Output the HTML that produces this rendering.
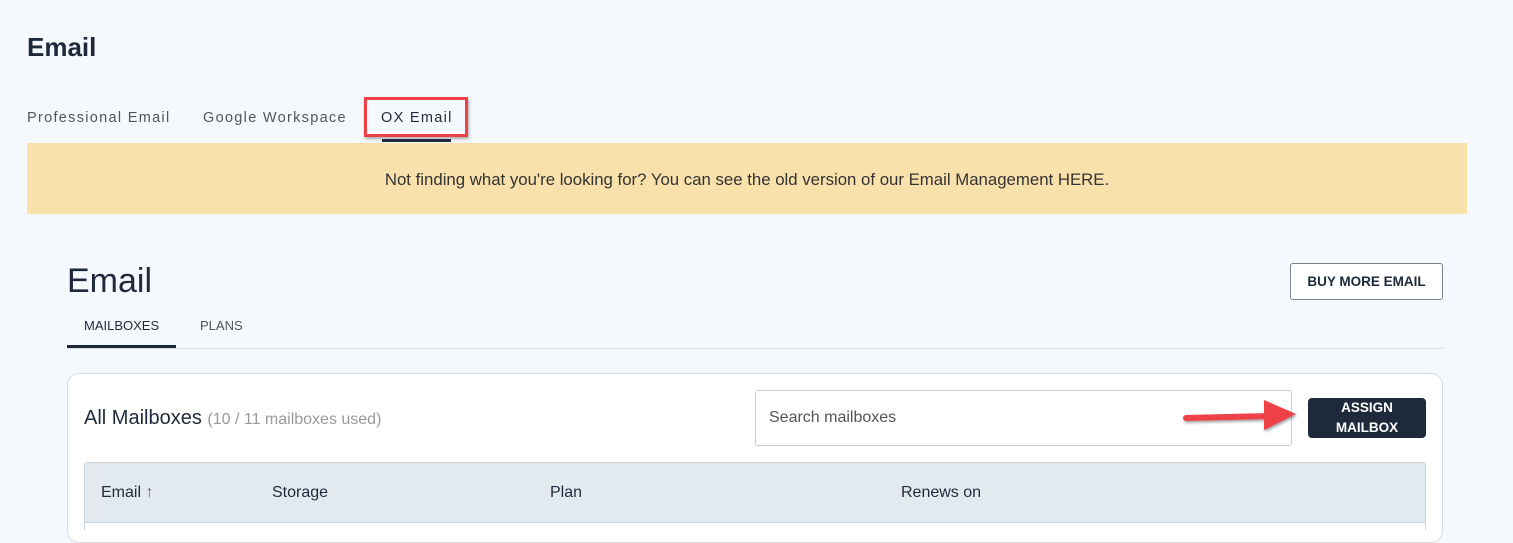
<!DOCTYPE html>
<html><head><style>
*{margin:0;padding:0;box-sizing:border-box}
body{width:1513px;height:527px;overflow:hidden;background:#f5f8fc;font-family:"Liberation Sans",sans-serif;position:relative;color:#1e2a3b}
.a{position:absolute;white-space:nowrap}
</style></head><body>
<div class="a" style="left:27px;top:32px;font-size:26px;font-weight:bold;color:#1e2a3b">Email</div>
<div class="a" style="left:27px;top:110px;font-size:14.5px;letter-spacing:1.3px;color:#555">Professional Email</div>
<div class="a" style="left:203px;top:110px;font-size:14.5px;letter-spacing:1.3px;color:#555">Google Workspace</div>
<div class="a" style="left:381px;top:110px;font-size:14.5px;letter-spacing:1.3px;color:#1e2a3b">OX Email</div>
<div class="a" style="left:364px;top:97px;width:104px;height:40px;border:3px solid #ee3f46;box-shadow:1px 2px 3px rgba(0,0,0,.3)"></div>
<div class="a" style="left:382px;top:139px;width:69px;height:3px;background:#1e2a3b"></div>
<div class="a" style="left:27px;top:143px;width:1440px;height:71px;background:#f9e1ab"></div>
<div class="a" style="left:0;width:1494px;top:170px;text-align:center;font-size:16.8px;color:#333">Not finding what you're looking for? You can see the old version of our Email Management HERE.</div>
<div class="a" style="left:67px;top:262px;font-size:34px;color:#1e2a3b">Email</div>
<div class="a" style="left:1290px;top:263px;width:153px;height:37px;border:1px solid #7a8390;border-radius:3px;font-size:13.5px;font-weight:bold;text-align:center;line-height:35px;background:#fff">BUY MORE EMAIL</div>
<div class="a" style="left:84px;top:318px;font-size:13px;color:#1e2a3b">MAILBOXES</div>
<div class="a" style="left:200px;top:318px;font-size:13px;color:#555">PLANS</div>
<div class="a" style="left:67px;top:348px;width:1376px;height:1px;background:#d8dde3"></div>
<div class="a" style="left:67px;top:345px;width:109px;height:3px;background:#1e2a3b"></div>
<div class="a" style="left:67px;top:373px;width:1376px;height:170px;background:#fff;border:1px solid #d8dde3;border-radius:12px"></div>
<div class="a" style="left:84px;top:407px;font-size:20px;color:#1e2a3b">All Mailboxes <span style="font-size:16px;color:#999">(10 / 11 mailboxes used)</span></div>
<div class="a" style="left:755px;top:390px;width:537px;height:56px;border:1px solid #ccc;border-radius:3px;background:#fff;font-size:16px;color:#555;padding:18px 13px">Search mailboxes</div>
<div class="a" style="left:1308px;top:398px;width:118px;height:40px;background:#1e2a3b;border-radius:4px;color:#fff;font-size:13.5px;font-weight:600;text-align:center;line-height:20px">ASSIGN<br>MAILBOX</div>
<svg class="a" style="left:1178px;top:396px" width="122" height="40"><defs><filter id="s"><feDropShadow dx="1" dy="2" stdDeviation="1.2" flood-opacity=".35"/></filter></defs><g filter="url(#s)"><line x1="8" y1="22" x2="92" y2="20" stroke="#ee3f46" stroke-width="6" stroke-linecap="round"/><polygon points="86,4 118,18 86,34" fill="#ee3f46"/></g></svg>
<div class="a" style="left:84px;top:462px;width:1342px;height:70px;background:#e3eaef;border:1px solid #ccd3d9;border-radius:3px"></div>
<div class="a" style="left:85px;top:522px;width:1340px;height:10px;background:#fff;border-top:1px solid #ccd3d9"></div>
<div class="a" style="left:101px;top:484px;font-size:16px;color:#1e2a3b">Email <span style="color:#666">↑</span></div>
<div class="a" style="left:272px;top:484px;font-size:16px">Storage</div>
<div class="a" style="left:550px;top:484px;font-size:16px">Plan</div>
<div class="a" style="left:901px;top:484px;font-size:16px">Renews on</div>
</body></html>
